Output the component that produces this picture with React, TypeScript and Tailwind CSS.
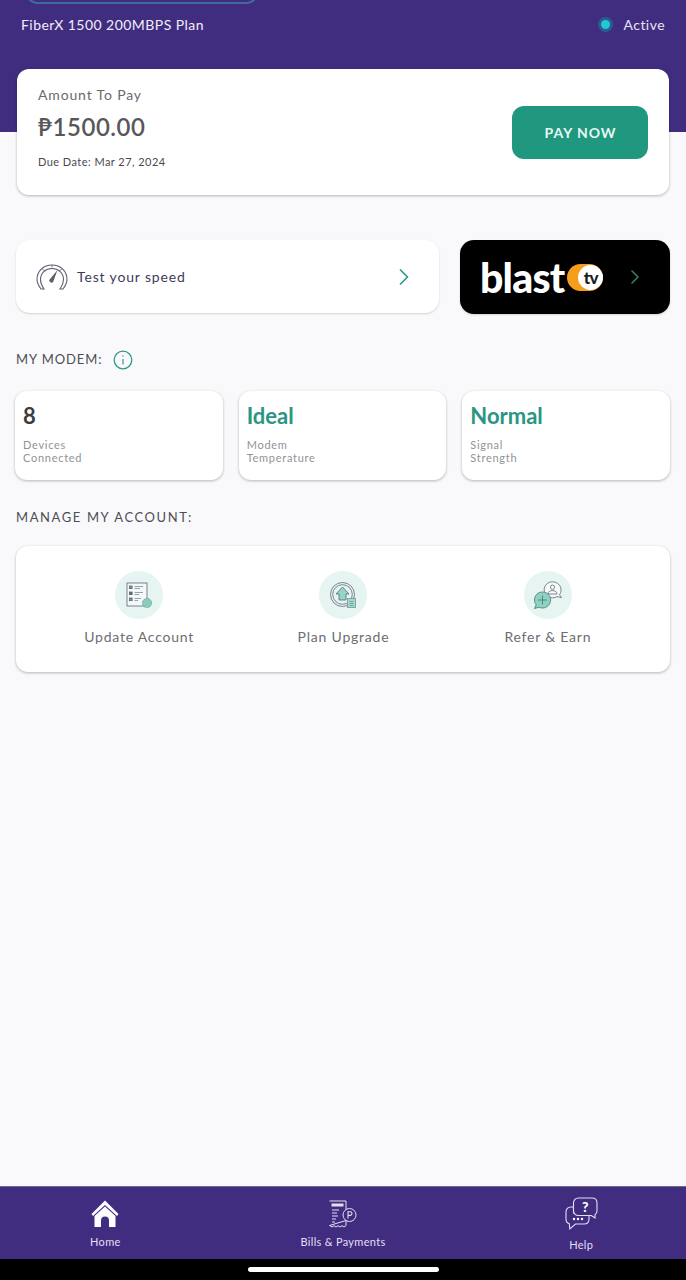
import { ChevronRight } from 'lucide-react';
import type { ReactNode } from 'react';

const font = { fontFamily: 'Lato, "Noto Sans", sans-serif' };

function Gauge() {
  return (
    <svg width="32" height="26" viewBox="0 0 32 26" fill="none" stroke="#5b5f6e" strokeWidth="1.1">
      <path d="M8 25 L5 25 C2.5 21.5 1 18.5 1 15.5 C1 7 7.5 1 16 1 C24.5 1 31 7 31 15.5 C31 18.5 29.5 21.5 27 25 L24 25 C26.5 21.5 27.5 18.5 27.5 15.5 C27.5 9 22.5 4.5 16 4.5 C9.5 4.5 4.5 9 4.5 15.5 C4.5 18.5 5.5 21.5 8 25 Z" />
      <path d="M13.2 16 L21.5 6 L17 18.2 A2.4 2.4 0 0 1 13.2 16 Z" fill="#5b5f6e" stroke="none" />
      <path d="M16 1 V3.5 M6.5 5 L8.5 7 M25.5 5 L23.5 7" strokeWidth="0.8" />
    </svg>
  );
}

function InfoIcon() {
  return (
    <svg width="20" height="20" viewBox="0 0 20 20" fill="none" stroke="#2f9a85" strokeWidth="1.3">
      <circle cx="10" cy="10" r="8.8" />
      <path d="M10 9 V14.5" strokeWidth="1.2" />
      <circle cx="10" cy="6" r="0.7" fill="#2f9a85" stroke="none" />
    </svg>
  );
}

function UpdateIcon() {
  return (
    <svg width="28" height="28" viewBox="0 0 28 28" fill="none" stroke="#5d6478" strokeWidth="0.8">
      <rect x="2" y="2" width="20" height="23" fill="#f2f9f8" />
      <rect x="4.5" y="5" width="2.6" height="2.6" fill="#8a90a0" />
      <rect x="4.5" y="11" width="2.6" height="2.6" fill="#5d6478" />
      <rect x="4.5" y="17" width="2.6" height="2.6" fill="#8a90a0" />
      <path d="M9.5 5.5 H18 M9.5 7.5 H15 M9.5 11.5 H18 M9.5 13.5 H14 M9.5 17.5 H16 M9.5 19.5 H13" strokeWidth="0.6" />
      <circle cx="22" cy="22" r="4.6" fill="#8ccabb" stroke="#4d9a8a" strokeDasharray="1.4 0.8" />
    </svg>
  );
}

function UpgradeIcon() {
  return (
    <svg width="28" height="28" viewBox="0 0 28 28" fill="none" stroke="#5d6478" strokeWidth="0.8">
      <circle cx="13.5" cy="13.5" r="12" />
      <circle cx="13.5" cy="13.5" r="9.8" />
      <path d="M13.5 6 L20 13 H17 V19 H10 V13 H7 Z" fill="#95d5c8" />
      <rect x="18.5" y="17.5" width="8" height="9" fill="#a9d9ce" stroke="#6b9a93" />
      <path d="M20.5 20.5 H24.5 M20.5 22.5 H24.5 M20.5 24.5 H24.5" strokeWidth="0.5" />
    </svg>
  );
}

function ReferIcon() {
  return (
    <svg width="28" height="28" viewBox="0 0 28 28" fill="none" stroke="#5d6478" strokeWidth="0.8">
      <path d="M18.5 0.8 C23 0.8 27 4.2 27 8.8 C27 11 26.3 12.6 25.4 13.6 L27.5 16.6 L23 15.6 C21.6 16.4 20 16.8 18.5 16.8 C14 16.8 10.2 13.3 10.2 8.8 C10.2 4.2 14 0.8 18.5 0.8 Z" fill="#f7fbfa" />
      <circle cx="18.5" cy="6.2" r="2.1" />
      <path d="M14 13 C14 10.6 16 9.6 18.5 9.6 C21 9.6 23 10.6 23 13 Z" />
      <path d="M8.5 11 C13 11 16.6 14.4 16.6 19 C16.6 23.4 13 27 8.5 27 C7.2 27 6 26.7 5 26.2 L0.5 27.5 L2.2 23.8 C1 22.6 0.5 20.8 0.5 19 C0.5 14.4 4 11 8.5 11 Z" fill="#8fd2c4" stroke="#447a74" />
      <path d="M8.5 14.5 V23.5 M4 19 H13" stroke="#3a7a70" />
    </svg>
  );
}

function HomeIcon() {
  return (
    <svg width="28" height="28" viewBox="0 0 28 28" fill="#ffffff">
      <path d="M14 0.5 L27.5 14 L26 16 L14 5 L2 16 L0.5 14 Z" />
      <path d="M14 6.5 L24.5 16 V27 H18 V20.5 A4 4 0 0 0 10 20.5 V27 H3.5 V16 Z" />
    </svg>
  );
}

function BillsIcon() {
  return (
    <svg width="30" height="28" viewBox="0 0 30 28" fill="none" stroke="#e4def5" strokeWidth="1">
      <path d="M1.5 1 H18 V9.5 M18 20.5 V25.5 L16 27 L14 25.7 L12 27 L10 25.7 L8 27 L6 25.7 L4 27 L1.5 25.5 Z" />
      <rect x="3.5" y="3.5" width="12" height="3" fill="#e4def5" stroke="none" />
      <path d="M4 10 H11 M4 13 H9 M4 16 H10 M4 19 H8 M4 22 H7" />
      <circle cx="21.5" cy="15" r="6.5" />
      <path d="M20 18.5 V11.8 H22.2 A1.8 1.8 0 0 1 22.2 15.4 H20" strokeWidth="1.1" />
    </svg>
  );
}

function HelpIcon() {
  return (
    <svg width="33" height="33" viewBox="0 0 33 33" fill="none" stroke="#e4def5" strokeWidth="1.1">
      <path d="M6 10 C2.8 10 1 12.2 1 15 V22 C1 24.6 2.4 26.2 4.3 26.7 L4.8 31.8 L10.5 27 H19 C22 27 24 25 24 22 V16 H8.5 V10 Z" />
      <path d="M13.5 1 H27 C30 1 32 3 32 6 V13.5 C32 15.6 31.2 17 30 17.8 V21 L26.3 18.5 H13.5 C10.5 18.5 8.5 16.5 8.5 13.5 V6 C8.5 3 10.5 1 13.5 1 Z" fill="#412d80" />
      <text x="20.3" y="14.5" textAnchor="middle" fontSize="14" fontWeight="900" fill="#ffffff" stroke="none" fontFamily="Lato, sans-serif">?</text>
      <circle cx="9" cy="22" r="1.2" fill="#ffffff" stroke="none" />
      <circle cx="13" cy="22" r="1.2" fill="#ffffff" stroke="none" />
      <circle cx="17" cy="22" r="1.2" fill="#ffffff" stroke="none" />
    </svg>
  );
}

function ModemStat({ value, lines, green }: { value: string; lines: [string, string]; green?: boolean }) {
  return (
    <div className="h-[89px] rounded-xl bg-white pl-2 pt-[13px] shadow-[0_1px_3px_rgba(0,0,0,0.28)]">
      <div className={`text-[22px] leading-6 font-bold ${green ? 'text-[#2a9583]' : 'text-[#3d3d40]'}`}>{value}</div>
      <div className="mt-2.5 text-[11px] leading-[13px] tracking-[0.72px] text-[#929296]">
        {lines[0]}
        <br />
        {lines[1]}
      </div>
    </div>
  );
}

function ManageItem({ icon, label }: { icon: ReactNode; label: string }) {
  return (
    <div className="flex flex-col items-center">
      <div className="flex h-12 w-12 items-center justify-center rounded-full bg-[#e6f4f2]">{icon}</div>
      <div className="mt-[9px] text-[14px] leading-[18px] tracking-[0.78px] text-[#6d6d72]">{label}</div>
    </div>
  );
}

function NavItem({ icon, label, className }: { icon: ReactNode; label: string; className: string }) {
  return (
    <div className={`flex flex-col items-center ${className}`}>
      <div className="flex h-[33px] items-center justify-center">{icon}</div>
      {label}
    </div>
  );
}

export default function App() {
  return (
    <div className="flex h-[1280px] w-[686px] flex-col overflow-hidden bg-[#f9f9fc]" style={font}>
      <header className="h-[132px] shrink-0 bg-[#412d80]">
        <div className="ml-[25px] -mt-[22px] h-[26px] w-[234px] rounded-full border-2 border-[#3f6a9c]" />
        <div className="flex items-center justify-between px-[21px] pt-3">
          <span className="text-[14px] leading-[18px] tracking-[0.46px] text-[#f1eef9]">FiberX 1500 200MBPS Plan</span>
          <div className="-mt-px flex items-center gap-[11px]">
            <span className="flex h-[15px] w-[15px] items-center justify-center rounded-full bg-[#2b5c91]">
              <span className="h-[9px] w-[9px] rounded-full bg-[#22c7cf]" />
            </span>
            <span className="text-[14px] leading-[18px] tracking-[0.45px] text-[#e6e2f3]">Active</span>
          </div>
        </div>
      </header>

      <main className="flex-1 px-4">
        <section className="-mt-[63px] mx-px flex h-[126px] items-center justify-between rounded-xl bg-white px-[21px] shadow-[0_1px_3px_rgba(0,0,0,0.28)]">
          <div className="pb-[9px]">
            <div className="text-[14px] leading-[18px] tracking-[0.85px] text-[#6a6a6e]">Amount To Pay</div>
            <div className="mt-[9px] text-[24px] leading-7 font-semibold tracking-[0.55px] text-[#58585c]">₱1500.00</div>
            <div className="mt-[14px] text-[11px] leading-[14px] tracking-[0.45px] text-[#4a4a4e]">Due Date: Mar 27, 2024</div>
          </div>
          <button className="h-[53px] w-[136px] rounded-xl bg-[#20977f] pl-px text-[14px] font-bold tracking-[0.95px] text-[#e6f8f4]">PAY NOW</button>
        </section>

        <div className="mt-[45px] flex gap-[21px]">
          <div className="flex h-[73px] w-[423px] items-center rounded-[14px] bg-white pl-5 pr-[21px] shadow-[0_1px_2px_rgba(0,0,0,0.16)]">
            <Gauge />
            <span className="ml-[9px] flex-1 text-[14px] tracking-[0.85px] text-[#3f3b5c]">Test your speed</span>
            <ChevronRight size={28} strokeWidth={1.5} className="text-[#2f9a85]" />
          </div>
          <div className="flex h-[74px] w-[210px] items-center rounded-[14px] bg-black pl-5 shadow-[0_1px_2px_rgba(0,0,0,0.16)]">
            <span className="text-[41px] leading-none font-black tracking-[-0.8px] text-white">blast</span>
            <div className="relative ml-[3px] h-[27px] w-[36px] shrink-0 rounded-full bg-[#f59e1b]">
              <span className="absolute right-0 top-px flex h-[25px] w-[25px] items-center justify-center rounded-full bg-white text-[17px] leading-none font-black tracking-[-0.5px] text-[#1c1c1c]">tv</span>
            </div>
            <ChevronRight size={24} strokeWidth={1.6} className="ml-5 shrink-0 text-[#2f7f6f]" />
          </div>
        </div>

        <div className="mt-[36px] flex h-5 items-center gap-[11px]">
          <span className="text-[13px] tracking-[0.9px] text-[#4d4d52]">MY MODEM:</span>
          <InfoIcon />
        </div>

        <div className="mt-[21px] -ml-px grid grid-cols-3 gap-4">
          <ModemStat value="8" lines={['Devices', 'Connected']} />
          <ModemStat value="Ideal" lines={['Modem', 'Temperature']} green />
          <ModemStat value="Normal" lines={['Signal', 'Strength']} green />
        </div>

        <div className="mt-[29px] text-[13px] leading-4 tracking-[1.6px] text-[#4d4d52]">MANAGE MY ACCOUNT:</div>

        <section className="mt-[21px] grid h-[126px] grid-cols-3 rounded-xl bg-white pl-[21px] pr-5 pt-[25px] shadow-[0_1px_3px_rgba(0,0,0,0.28)]">
          <ManageItem icon={<UpdateIcon />} label="Update Account" />
          <ManageItem icon={<UpgradeIcon />} label="Plan Upgrade" />
          <ManageItem icon={<ReferIcon />} label="Refer & Earn" />
        </section>
      </main>

      <nav className="grid h-[73px] shrink-0 grid-cols-3 border-t border-[#6f6a8c] bg-[#412d80] pt-[10px] text-[11px] leading-[14px] tracking-[0.3px] text-[#e4def5]">
        <NavItem icon={<HomeIcon />} label="Home" className="gap-[5px] pr-[18px]" />
        <NavItem icon={<BillsIcon />} label="Bills & Payments" className="gap-[5px]" />
        <NavItem icon={<HelpIcon />} label="Help" className="gap-2 pl-[19px]" />
      </nav>
      <div className="flex h-[21px] shrink-0 items-center justify-center bg-black">
        <div className="h-[5px] w-[191px] rounded-full bg-white" />
      </div>
    </div>
  );
}
